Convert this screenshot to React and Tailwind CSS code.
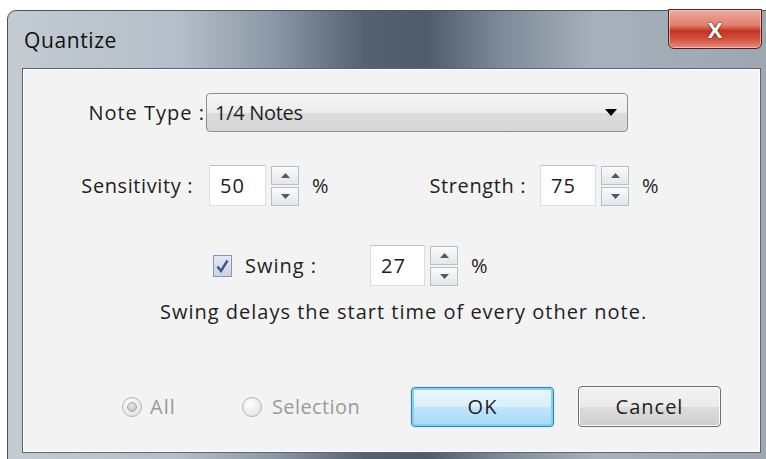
import React from "react";

const font = { fontFamily: '"Open Sans", "Noto Sans", sans-serif' };

function Spinner() {
  return (
    <div className="flex flex-col gap-[2px] w-[28px]">
      <div className="h-[19px] border border-[#b9bec6] bg-[linear-gradient(#fafafa,#e4e6ea)] flex items-center justify-center">
        <svg width="9" height="5" viewBox="0 0 9 5"><path d="M0 5 L4.5 0 L9 5 Z" fill="#4d5a6e" /></svg>
      </div>
      <div className="h-[19px] border border-[#b9bec6] bg-[linear-gradient(#fafafa,#e4e6ea)] flex items-center justify-center">
        <svg width="9" height="5" viewBox="0 0 9 5"><path d="M0 0 L9 0 L4.5 5 Z" fill="#4d5a6e" /></svg>
      </div>
    </div>
  );
}

function NumberField({ value, w = 57 }) {
  return (
    <div
      className="h-[41px] bg-white border border-[#dadde2] border-t-[#bfc3c9] flex items-center pl-[10px] text-[#1c1c1c]"
      style={{ width: w }}
    >
      {value}
    </div>
  );
}

function Radio({ checked }) {
  return (
    <div className="w-[20px] h-[20px] rounded-full border border-[#b5b5b5] bg-[radial-gradient(circle_at_40%_35%,#ffffff,#dcdcdc)] flex items-center justify-center">
      {checked && (
        <div className="w-[10px] h-[10px] rounded-full border border-[#a8a8a8] bg-[radial-gradient(circle_at_40%_35%,#e8e8e8,#b8b8b8)]" />
      )}
    </div>
  );
}

export default function App() {
  return (
    <div className="w-[766px] h-[459px] bg-white overflow-hidden" style={font}>
      <div className="ml-[7px] mt-[10px] w-[775px] h-[460px] rounded-tl-[9px] border border-[#4a525c] bg-[linear-gradient(90deg,#c3cbd3_0%,#b5bfc9_22%,#8d99a6_34%,#55626f_46%,#4e5b68_54%,#7e8b98_64%,#a7b1bb_76%,#9ba6b1_100%)] flex flex-col">
        {/* title bar */}
        <div className="h-[57px] flex items-start relative">
          <div className="pl-[16px] pt-[15px] text-[21px] tracking-[0.6px] text-[#111] leading-[28px]">Quantize</div>
          <div className="absolute left-[660px] top-[-2px] w-[94px] h-[40px] rounded-b-[6px] border border-[#4b2420] bg-[linear-gradient(#eea99d_0%,#e08070_40%,#c43222_55%,#d0503c_75%,#e88a78_100%)] shadow-[inset_0_0_0_1px_rgba(255,220,210,0.6)] flex items-center justify-center">
            <span className="text-white font-bold text-[22px] leading-none" style={{ textShadow: "0 0 2px #5a1a12, 0 0 1px #5a1a12" }}>X</span>
          </div>
        </div>
        {/* client area */}
        <div className="ml-[14px] w-[739px] h-[385px] border border-[#5b6470] bg-[#f3f3f3] shadow-[inset_0_0_0_1px_#ffffff] flex flex-col text-[20px] leading-[24px] tracking-[1px] text-[#1e1e1e]">
          {/* note type */}
          <div className="flex items-center mt-[24px] h-[39px]">
            <div className="w-[183px] text-right pr-[1px] whitespace-nowrap">Note Type :</div>
            <div className="w-[422px] h-[39px] rounded-[4px] border border-[#8e8f8f] bg-[linear-gradient(#f6f6f6_0%,#ececec_50%,#dcdcdc_51%,#d6d6d6_100%)] flex items-center justify-between pl-[8px] pr-[10px]">
              <span className="tracking-[-0.3px]">1/4 Notes</span>
              <svg width="12" height="7" viewBox="0 0 12 7"><path d="M0 0 L12 0 L6 7 Z" fill="#000" /></svg>
            </div>
          </div>
          {/* sensitivity / strength */}
          <div className="flex items-center mt-[33px] h-[41px]">
            <div className="w-[170px] text-right whitespace-nowrap tracking-[0.6px]">Sensitivity :</div>
            <div className="ml-[16px]"><NumberField value="50" /></div>
            <div className="ml-[5px]"><Spinner /></div>
            <div className="ml-[13px] w-[20px]">%</div>
            <div className="w-[194px] text-right whitespace-nowrap tracking-[0.6px]">Strength :</div>
            <div className="ml-[14px]"><NumberField value="75" w={56} /></div>
            <div className="ml-[5px]"><Spinner /></div>
            <div className="ml-[13px]">%</div>
          </div>
          {/* swing */}
          <div className="flex items-center mt-[39px] h-[41px]">
            <div className="ml-[190px] w-[19px] h-[22px] border border-[#8a97ad] bg-[linear-gradient(#e4e9f2,#c9d3e3)] flex items-center justify-center">
              <svg width="13" height="14" viewBox="0 0 13 14">
                <path d="M1.5 7.5 L5 12 L11.5 1.5" stroke="#3d5686" strokeWidth="2.4" fill="none" />
              </svg>
            </div>
            <div className="ml-[13px] w-[125px] whitespace-nowrap">Swing :</div>
            <div><NumberField value="27" w={55} /></div>
            <div className="ml-[5px]"><Spinner /></div>
            <div className="ml-[13px]">%</div>
          </div>
          {/* description */}
          <div className="mt-[14px] ml-[137px] whitespace-nowrap">Swing delays the start time of every other note.</div>
          {/* bottom row */}
          <div className="flex items-center mt-[62px] h-[41px]">
            <div className="ml-[99px]"><Radio checked /></div>
            <div className="ml-[8px] w-[92px] text-[#9a9a9a]">All</div>
            <Radio />
            <div className="ml-[10px] w-[139px] text-[#9a9a9a] tracking-[0.4px]">Selection</div>
            <div className="w-[143px] h-[40px] rounded-[4px] border border-[#3c7fb1] bg-[linear-gradient(#eaf6fd_0%,#d9f0fc_50%,#bee6fd_51%,#a7d9f5_100%)] shadow-[inset_0_0_0_2px_#7fd3f5,0_0_2px_#9cdcf5] flex items-center justify-center">
              OK
            </div>
            <div className="ml-[24px] w-[143px] h-[41px] rounded-[4px] border border-[#707070] bg-[linear-gradient(#f2f2f2_0%,#ebebeb_50%,#dddddd_51%,#cfcfcf_100%)] shadow-[inset_0_0_0_1px_#fcfcfc] flex items-center justify-center">
              Cancel
            </div>
          </div>
        </div>
      </div>
    </div>
  );
}
